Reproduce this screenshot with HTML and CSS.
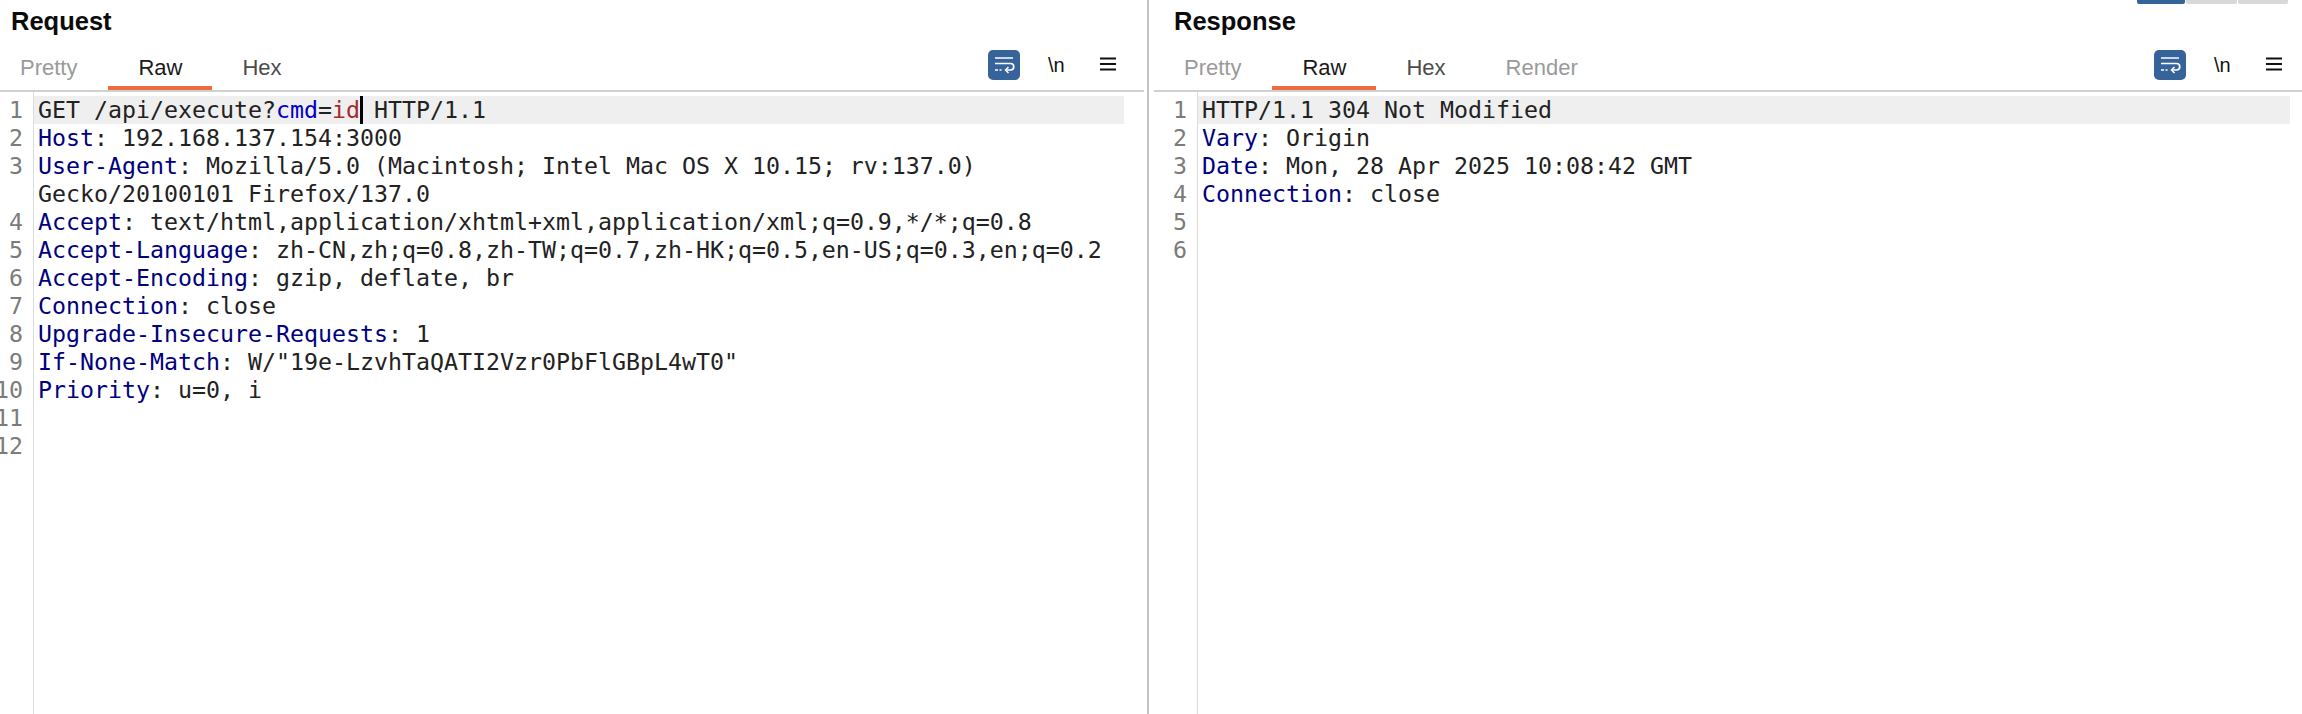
FILE: index.html
```html
<!DOCTYPE html>
<html lang="en">
<head>
<meta charset="utf-8">
<title>Request / Response</title>
<link rel="stylesheet" href="styles.css">
</head>
<body>
<div class="layout-switch"><span class="seg seg-on"></span><span class="seg"></span><span class="seg"></span></div>
<main class="split">
  <section class="pane pane-req">
    <h2 class="title">Request</h2>
    <div class="toolbar">
      <nav class="tabs">
        <span class="tab tab-dim">Pretty</span>
        <span class="tab tab-active">Raw</span>
        <span class="tab">Hex</span>
      </nav>
      <div class="tools">
        <svg class="wrap" width="32" height="30" viewBox="0 0 32 30"><rect width="32" height="30" rx="5" fill="#37639b"/><path d="M7 8h18M7 13.500h15.500a3.200 3.200 0 0 1 0 6.500H18M7 20h3M11.500 20h2" fill="none" stroke="#fff" stroke-width="1.700"/><path d="M20.500 17l-3 3 3 3" fill="none" stroke="#fff" stroke-width="1.500"/></svg>
        <span class="newline">\n</span>
        <svg class="menu" width="16" height="14" viewBox="0 0 16 14"><path d="M0 1.500h16M0 7h16M0 12.500h16" stroke="#111" stroke-width="2"/></svg>
      </div>
    </div>
    <div class="editor">
      <ol class="gutter">
        <li>1</li><li>2</li><li class="wrapped">3</li><li>4</li><li>5</li><li>6</li><li>7</li><li>8</li><li>9</li><li>10</li><li>11</li><li>12</li>
      </ol>
      <div class="code">
        <div class="line line-current">GET /api/execute?<span class="param">cmd</span>=<span class="value">id</span><span class="caret"></span> HTTP/1.1</div>
        <div class="line"><span class="hdr">Host</span>: 192.168.137.154:3000</div>
        <div class="line"><span class="hdr">User-Agent</span>: Mozilla/5.0 (Macintosh; Intel Mac OS X 10.15; rv:137.0)</div>
        <div class="line">Gecko/20100101 Firefox/137.0</div>
        <div class="line"><span class="hdr">Accept</span>: text/html,application/xhtml+xml,application/xml;q=0.9,*/*;q=0.8</div>
        <div class="line"><span class="hdr">Accept-Language</span>: zh-CN,zh;q=0.8,zh-TW;q=0.7,zh-HK;q=0.5,en-US;q=0.3,en;q=0.2</div>
        <div class="line"><span class="hdr">Accept-Encoding</span>: gzip, deflate, br</div>
        <div class="line"><span class="hdr">Connection</span>: close</div>
        <div class="line"><span class="hdr">Upgrade-Insecure-Requests</span>: 1</div>
        <div class="line"><span class="hdr">If-None-Match</span>: W/"19e-LzvhTaQATI2Vzr0PbFlGBpL4wT0"</div>
        <div class="line"><span class="hdr">Priority</span>: u=0, i</div>
      </div>
    </div>
  </section>
  <section class="pane pane-res">
    <h2 class="title">Response</h2>
    <div class="toolbar">
      <nav class="tabs">
        <span class="tab tab-dim">Pretty</span>
        <span class="tab tab-active">Raw</span>
        <span class="tab">Hex</span>
        <span class="tab tab-dim">Render</span>
      </nav>
      <div class="tools">
        <svg class="wrap" width="32" height="30" viewBox="0 0 32 30"><rect width="32" height="30" rx="5" fill="#37639b"/><path d="M7 8h18M7 13.500h15.500a3.200 3.200 0 0 1 0 6.500H18M7 20h3M11.500 20h2" fill="none" stroke="#fff" stroke-width="1.700"/><path d="M20.500 17l-3 3 3 3" fill="none" stroke="#fff" stroke-width="1.500"/></svg>
        <span class="newline">\n</span>
        <svg class="menu" width="16" height="14" viewBox="0 0 16 14"><path d="M0 1.500h16M0 7h16M0 12.500h16" stroke="#111" stroke-width="2"/></svg>
      </div>
    </div>
    <div class="editor">
      <ol class="gutter">
        <li>1</li><li>2</li><li>3</li><li>4</li><li>5</li><li>6</li>
      </ol>
      <div class="code">
        <div class="line line-current">HTTP/1.1 304 Not Modified</div>
        <div class="line"><span class="hdr">Vary</span>: Origin</div>
        <div class="line"><span class="hdr">Date</span>: Mon, 28 Apr 2025 10:08:42 GMT</div>
        <div class="line"><span class="hdr">Connection</span>: close</div>
      </div>
    </div>
  </section>
</main>
</body>
</html>
```
FILE: styles.css
```css
* { box-sizing: border-box; }
html, body { margin: 0; height: 100%; background: #fff; overflow: hidden; }
body { position: relative; font-family: "Liberation Sans", Arial, sans-serif; }

.layout-switch { position: absolute; top: 0; left: 2137px; display: flex; gap: 1px; height: 4px; width: 151px; }
.seg { flex: 1; background: #d9d9d9; border-radius: 0 0 2px 2px; }
.seg-on { flex: 0 0 48px; background: #37639b; }

.split { display: flex; height: 714px; }
.pane { display: flex; flex-direction: column; height: 100%; }
.pane-req { flex: none; width: 1149px; border-right: 2px solid #c4c4c4; padding-right: 3px; }
.pane-res { flex: 1; min-width: 0; padding-left: 5px; }

.title { flex: none; margin: 0; height: 38px; padding: 8px 0 0 11px; font-size: 25.500px; line-height: 26px; font-weight: 700; color: #0b0b0b; }
.pane-res .title { padding-left: 20px; }

.toolbar { flex: none; display: flex; justify-content: space-between; height: 54px; border-bottom: 2px solid #d0d0d0; }
.tabs { display: flex; margin-left: -10px; }
.pane-res .tabs { margin-left: 0; }
.tab { padding: 18px 30px 0; font-size: 22px; line-height: 24px; color: #4b4b4b; }
.tab-dim { color: #9a9a9a; }
.tab-active { margin-left: 1px; color: #1a1a1a; border-bottom: 4px solid #ec6b3f; }

.tools { display: flex; align-items: flex-start; padding: 12px 28px 0 0; }
.pane-res .tools { padding-right: 20px; }
.wrap { margin-right: 28px; }
.newline { width: 17px; margin: 3px 35px 0 0; font-size: 20px; line-height: 24px; color: #111; }
.menu { margin-top: 7px; }

.editor { flex: 1; min-height: 0; display: flex; padding-top: 4px; font-family: "DejaVu Sans Mono", "Liberation Mono", monospace; font-size: 23.250px; line-height: 28px; }
.gutter { flex: none; list-style: none; margin: -4px 0 0; padding: 4px 0 0; width: 34px; border-right: 1px solid #dcdcdc; color: #7b7b7b; }
.gutter li { display: flex; justify-content: flex-end; height: 28px; padding-right: 10px; }
.gutter .wrapped { height: 56px; }
.pane-res .gutter { width: 44px; }

.code { flex: 1; min-width: 0; padding-right: 20px; color: #222; }
.pane-res .code { padding-right: 12px; }
.line { height: 28px; padding-left: 4px; white-space: pre; }
.line-current { background: #efefef; }
.hdr { color: #000080; }
.param { color: #0000c8; }
.value { color: #a52a2a; }
.caret { display: inline-block; width: 3px; height: 28px; margin-right: -3px; background: #000; vertical-align: top; }
```
